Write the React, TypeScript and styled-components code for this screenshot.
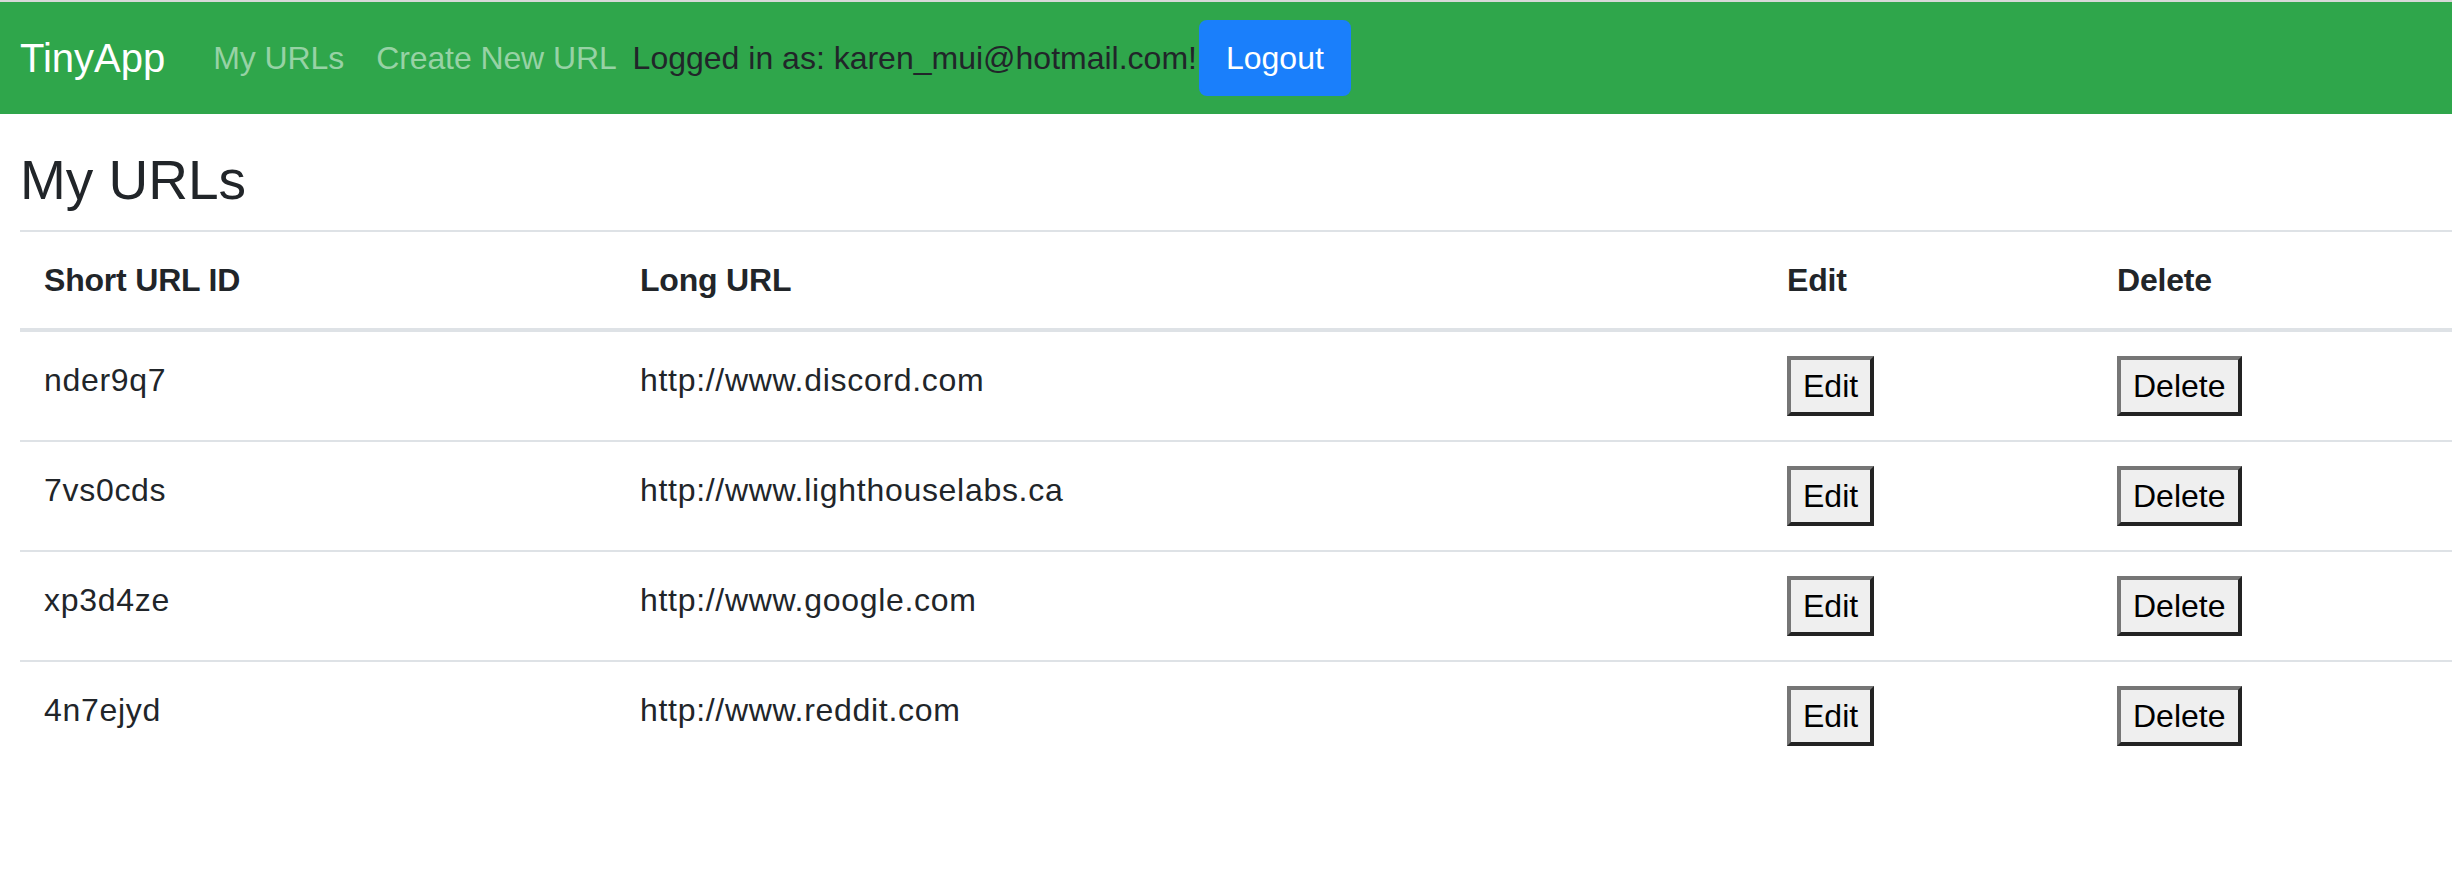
import React from "react";
import styled, { createGlobalStyle } from "styled-components";

const GlobalStyle = createGlobalStyle`
  html, body {
    margin: 0;
    padding: 0;
    background: #ffffff;
  }
  body {
    font-family: "Liberation Sans", Arial, Helvetica, sans-serif;
    color: #212529;
    font-size: 32px;
    line-height: 1.5;
  }
  * { box-sizing: border-box; }
`;

const Navbar = styled.nav`
  display: flex;
  align-items: center;
  height: 114px;
  padding: 16px 20px;
  background: #2fa64b;
  border-top: 2px solid #d8d8d8;
`;

const Brand = styled.a`
  font-size: 40px;
  line-height: 60px;
  padding: 10px 0;
  margin-right: 32px;
  color: #ffffff;
  text-decoration: none;
  white-space: nowrap;
`;

const NavList = styled.div`
  display: flex;
  align-items: center;
`;

const NavLink = styled.a`
  font-size: 32px;
  line-height: 48px;
  padding: 16px 16px;
  color: #97d2a5;
  text-decoration: none;
  white-space: nowrap;
  letter-spacing: -0.1px;
`;

const LoggedIn = styled.span`
  font-size: 32px;
  line-height: 48px;
  color: #212529;
  white-space: nowrap;
`;

const LogoutButton = styled.button`
  font-family: inherit;
  font-size: 32px;
  line-height: 48px;
  padding: 12px 25px;
  border: 2px solid #1a7ffb;
  border-radius: 8px;
  background: #1a7ffb;
  color: #ffffff;
  margin-left: 2px;
  cursor: pointer;
`;

const Main = styled.main`
  padding: 33px 0 0 20px;
`;

const Title = styled.h3`
  margin: 0 0 16px 0;
  font-size: 55px;
  font-weight: 500;
  line-height: 67px;
  color: #212529;
`;

const Table = styled.table`
  width: 100%;
  table-layout: fixed;
  border-collapse: collapse;
  color: #212529;
`;

const HeadCell = styled.th`
  text-align: left;
  vertical-align: bottom;
  font-weight: 700;
  font-size: 32px;
  line-height: 48px;
  padding: 24px;
  border-top: 2px solid #dee2e6;
  border-bottom: 4px solid #dee2e6;
  letter-spacing: -0.2px;
`;

const Cell = styled.td`
  text-align: left;
  vertical-align: top;
  font-size: 32px;
  line-height: 48px;
  padding: 24px;
  border-top: 2px solid #dee2e6;
  letter-spacing: 0.7px;
`;

const ActionButton = styled.button`
  display: inline-block;
  vertical-align: top;
  font-family: "Liberation Sans", Arial, sans-serif;
  font-size: 32px;
  line-height: 48px;
  padding: 2px 12px;
  background: #efefef;
  color: #000000;
  border-style: solid;
  border-width: 4px;
  border-color: #767676 #232323 #232323 #767676;
  border-radius: 0;
  letter-spacing: 0;
  cursor: pointer;
`;

const rows = [
  { id: "nder9q7", url: "http://www.discord.com" },
  { id: "7vs0cds", url: "http://www.lighthouselabs.ca" },
  { id: "xp3d4ze", url: "http://www.google.com" },
  { id: "4n7ejyd", url: "http://www.reddit.com" },
];

export default function App() {
  return (
    <>
      <GlobalStyle />
      <Navbar>
        <Brand href="#">TinyApp</Brand>
        <NavList>
          <NavLink href="#">My URLs</NavLink>
          <NavLink href="#">Create New URL</NavLink>
          <LoggedIn>Logged in as: karen_mui@hotmail.com!</LoggedIn>
          <LogoutButton type="button">Logout</LogoutButton>
        </NavList>
      </Navbar>
      <Main>
        <Title>My URLs</Title>
        <Table>
          <colgroup>
            <col style={{ width: 596 }} />
            <col style={{ width: 1147 }} />
            <col style={{ width: 330 }} />
            <col />
          </colgroup>
          <thead>
            <tr>
              <HeadCell>Short URL ID</HeadCell>
              <HeadCell>Long URL</HeadCell>
              <HeadCell>Edit</HeadCell>
              <HeadCell>Delete</HeadCell>
            </tr>
          </thead>
          <tbody>
            {rows.map((r) => (
              <tr key={r.id}>
                <Cell>{r.id}</Cell>
                <Cell>{r.url}</Cell>
                <Cell>
                  <ActionButton type="button">Edit</ActionButton>
                </Cell>
                <Cell>
                  <ActionButton type="button">Delete</ActionButton>
                </Cell>
              </tr>
            ))}
          </tbody>
        </Table>
      </Main>
    </>
  );
}
